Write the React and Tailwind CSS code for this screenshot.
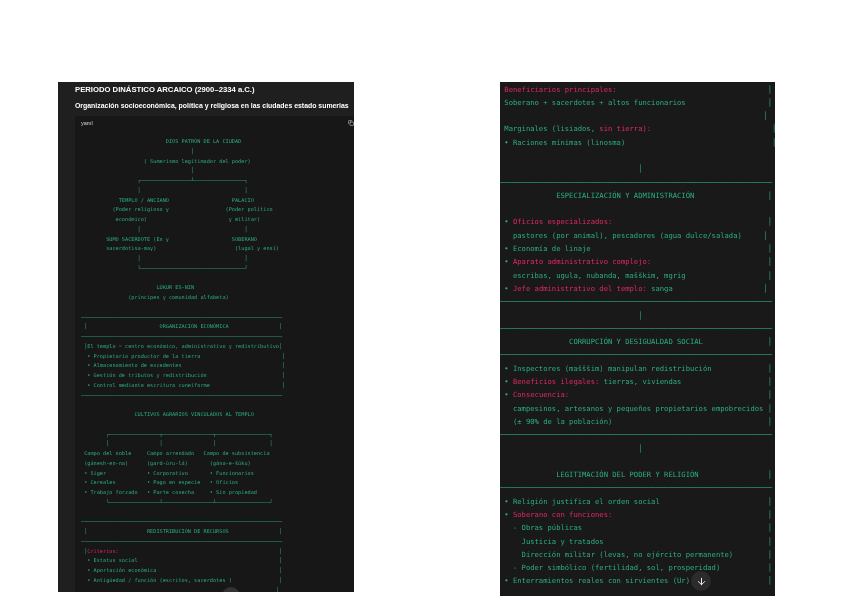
import React from 'react';
import { Copy, ArrowDown } from 'lucide-react';

const rule = (n) => '─'.repeat(n);

// left panel diagram, one string per row
const leftRows = [
  '                           DIOS PATRÓN DE LA CIUDAD',
  '                                   │',
  '                    ( Sumerismo legitimador del poder)',
  '                                   │',
  '                  ┌────────────────┴────────────────┐',
  '                  │                                 │',
  '            TEMPLO / ANCIANO                    PALACIO',
  '          (Poder religioso y                  (Poder político',
  '           económico)                          y militar)',
  '                  │                                 │',
  '        SUMO SACERDOTE (En y                    SOBERANO',
  '        sacerdotisa-may)                         (lugal y ensí)',
  '                  │                                 │',
  '                  └─────────────────────────────────┘',
  '',
  '                        LÚKUR ES-NIN',
  '               (príncipes y comunidad alfabeta)',
  '',
  rule(64),
  ' │                       ORGANIZACIÓN ECONÓMICA                │',
  rule(64),
  ' │El templo = centro económico, administrativo y redistributivo│',
  '  • Propietario productor de la tierra                          │',
  '  • Almacenamiento de excedentes                                │',
  '  • Gestión de tributos y redistribución                        │',
  '  • Control mediante escritura cuneiforme                       │',
  rule(64),
  '',
  '                 CULTIVOS AGRARIOS VINCULADOS AL TEMPLO',
  '',
  '        ┌────────────────┬────────────────┬─────────────────┐',
  '        │                │                │                 │',
  ' Campo del noble     Campo arrendado   Campo de subsistencia',
  ' (gánesh-en-na)      (gard-ùru-lá)       (gána-e-šúku)',
  ' • Siger             • Corporativo       • Funcionarios',
  ' • Cereales          • Pago en especie   • Oficios',
  ' • Trabajo forzado   • Parte cosecha     • Sin propiedad',
  '        └────────────────┴────────────────┴─────────────────┘',
  '',
  rule(64),
  ' │                   REDISTRIBUCIÓN DE RECURSOS                │',
  rule(64),
  [' │', { pink: 'Criterios:' }, '                                                   │'],
  '  • Estatus social                                             │',
  '  • Aportación económica                                       │',
  '  • Antigüedad / función (escritos, sacerdotes )               │',
  '                                                              │',
];

const rightRows = [
  [' ', { pink: 'Beneficiarios principales:' }, '                                   │'],
  ' Soberano + sacerdotes + altos funcionarios                   │',
  '                                                             │',
  [' Marginales (lisiados, ', { pink: 'sin tierra):' }, '                            │'],
  ' • Raciones mínimas (linosma)                                  │',
  '',
  '                                │',
  rule(63),
  '             ESPECIALIZACIÓN Y ADMINISTRACIÓN                 │',
  '',
  [' • ', { pink: 'Oficios especializados:' }, '                                    │'],
  '   pastores (por animal), pescadores (agua dulce/salada)     │',
  ' • Economía de linaje                                         │',
  [' • ', { pink: 'Aparato administrativo complejo:' }, '                           │'],
  '   escribas, ugula, nubanda, mašškim, mgrig                   │',
  [' • ', { pink: 'Jefe administrativo del templo:' }, ' sanga                     │'],
  rule(63),
  '                                │',
  rule(63),
  '                CORRUPCIÓN Y DESIGUALDAD SOCIAL               │',
  rule(63),
  ' • Inspectores (mašššim) manipulan redistribución             │',
  [' • ', { pink: 'Beneficios ilegales:' }, ' tierras, viviendas                    │'],
  [' • ', { pink: 'Consecuencia:' }, '                                              │'],
  '   campesinos, artesanos y pequeños propietarios empobrecidos │',
  '   (± 90% de la población)                                    │',
  rule(63),
  '                                │',
  '',
  '             LEGITIMACIÓN DEL PODER Y RELIGIÓN                │',
  rule(63),
  ' • Religión justifica el orden social                         │',
  [' • ', { pink: 'Soberano con funciones:' }, '                                    │'],
  '   - Obras públicas                                           │',
  '     Justicia y tratados                                      │',
  '     Dirección militar (levas, no ejército permanente)        │',
  '   - Poder simbólico (fertilidad, sol, prosperidad)           │',
  ' • Enterramientos reales con sirvientes (Ur)                  │',
];

function CodeRows({ rows, className }) {
  return (
    <pre className={`font-['DejaVu_Sans_Mono',monospace] text-[#2aae84] blur-[0.4px] ${className}`}>
      {rows.map((row, i) => (
        <div key={i} className="h-[1lh] whitespace-pre">
          {Array.isArray(row)
            ? row.map((part, j) =>
                typeof part === 'string' ? (
                  <span key={j}>{part}</span>
                ) : (
                  <span key={j} className="text-[#e0295f]">{part.pink}</span>
                )
              )
            : row}
        </div>
      ))}
    </pre>
  );
}

export default function App() {
  return (
    <div className="min-h-screen bg-white">
      <div className="h-[600px] overflow-hidden flex items-start pt-[82px] pl-[58px] font-['Liberation_Sans',sans-serif]">
        {/* left panel */}
        <div className="relative w-[296px] h-[510px] overflow-hidden bg-[#1f1f1f] shrink-0">
          <div className="pl-[17px] text-white blur-[0.3px]">
            <h1 className="h-[14px] pt-[1px] text-[7.7px] leading-[13px] font-bold whitespace-nowrap">
              PERIODO DINÁSTICO ARCAICO (2900–2334 a.C.)
            </h1>
            <p className="mt-[3px] h-[17px] text-[6.92px] leading-[14px] font-bold whitespace-nowrap">
              Organización socioeconómica, política y religiosa en las ciudades estado sumerias
            </p>
          </div>
          <div className="ml-[17px] w-[300px] h-[480px] bg-[#171717] rounded-t-sm">
            <div className="flex items-center justify-between h-[14px] pl-[6px] pr-[21px] text-[5.5px] text-[#d4d4d4] blur-[0.3px]">
              <span>yaml</span>
              <Copy size={6} />
            </div>
            <CodeRows rows={leftRows} className="mt-[7px] pl-[6px] text-[5.23px] leading-[9.75px]" />
          </div>
          <div className="absolute left-[164px] bottom-[-13px] w-[18px] h-[18px] rounded-full bg-[#333333]" />
        </div>

        {/* right panel */}
        <div className="relative ml-[146px] w-[275px] h-[514px] overflow-hidden bg-[#191919] shrink-0">
          <CodeRows rows={rightRows} className="pt-[0.5px] text-[7.18px] leading-[13.3px]" />
          <div className="absolute left-[191px] top-[489px] w-5 h-5 rounded-full bg-[#2b2b2b] flex items-center justify-center">
            <ArrowDown size={11} className="text-white" />
          </div>
        </div>
      </div>
    </div>
  );
}
